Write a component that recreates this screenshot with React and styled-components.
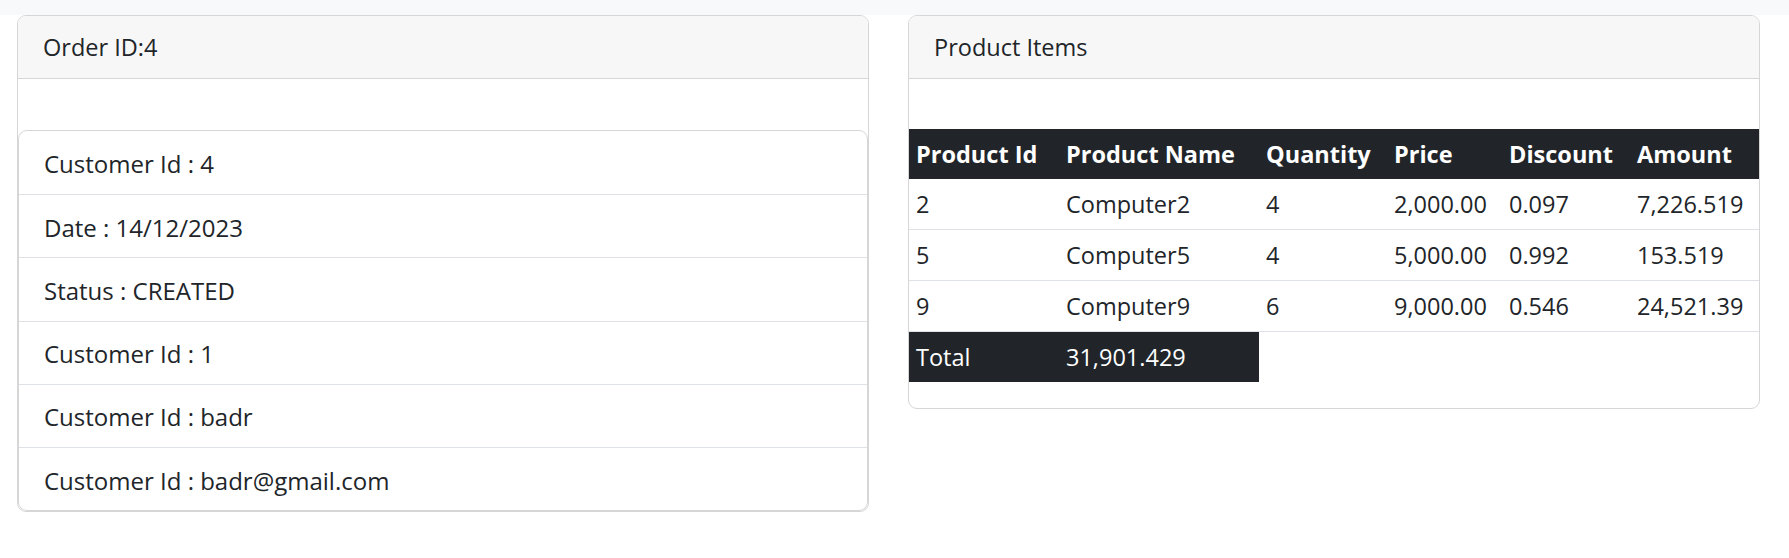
import * as React from "react";
import styled, { createGlobalStyle } from "styled-components";

const GlobalStyle = createGlobalStyle`
  body {
    margin: 0;
    background: #fff;
    color: #212529;
    font-family: "Open Sans", "Noto Sans", sans-serif;
  }
`;

const TopBar = styled.div`
  height: 15px;
  background-color: #f8f9fa;
`;

const Main = styled.div`
  display: grid;
  grid-template-columns: 852px 852px;
  column-gap: 39px;
  padding: 0 29px 0 17px;
  align-items: start;
`;

const Card = styled.div`
  border: 1px solid #d6d6d6;
  border-radius: 9px;
  overflow: hidden;
  background: #fff;
  padding-bottom: ${(p) => p.$bottom || 0}px;
`;

const CardHeader = styled.div`
  height: 62px;
  display: flex;
  align-items: center;
  padding: 0 25px;
  background-color: #f7f7f7;
  border-bottom: 1px solid #d6d6d6;
  font-size: 23.5px;
`;

const CardBody = styled.div`
  padding-top: ${(p) => p.$top}px;
`;

const ListGroup = styled.ul`
  list-style: none;
  margin: 0;
  padding: 0;
  border: 1px solid #d6d6d6;
  border-radius: 9px;
  overflow: hidden;
`;

const ListItem = styled.li`
  height: 63.2px;
  display: flex;
  align-items: center;
  padding: 2px 25px 0;
  box-sizing: border-box;
  font-size: 24px;
  & + & {
    border-top: 1px solid #dee2e6;
  }
`;

const Table = styled.table`
  width: 100%;
  table-layout: fixed;
  border-collapse: collapse;
  font-size: 23.5px;
`;

const HeadCell = styled.th`
  height: 50px;
  padding: 0 7px;
  text-align: left;
  font-weight: 700;
  color: #fff;
  background-color: #212529;
  white-space: nowrap;
`;

const Row = styled.tr`
  border-bottom: ${(p) => (p.$total ? "none" : "1px solid #dee2e6")};
`;

const Cell = styled.td`
  height: 50px;
  padding: 0 7px;
  white-space: nowrap;
  color: ${(p) => (p.$dark ? "#fff" : "#212529")};
  background-color: ${(p) => (p.$dark ? "#212529" : "transparent")};
`;

const info = [
  "Customer Id : 4",
  "Date : 14/12/2023",
  "Status : CREATED",
  "Customer Id : 1",
  "Customer Id : badr",
  "Customer Id : badr@gmail.com"
];

const items = [
  ["2", "Computer2", "4", "2,000.00", "0.097", "7,226.519"],
  ["5", "Computer5", "4", "5,000.00", "0.992", "153.519"],
  ["9", "Computer9", "6", "9,000.00", "0.546", "24,521.39"]
];

const widths = [150, 200, 128, 115, 128, 129];

export default function App() {
  return (
    <>
      <GlobalStyle />
      <TopBar />
      <Main>
        <Card>
          <CardHeader>Order ID:4</CardHeader>
          <CardBody $top={51}>
            <ListGroup>
              {info.map((line, index) => (
                <ListItem key={line + index}>{line}</ListItem>
              ))}
            </ListGroup>
          </CardBody>
        </Card>

        <Card $bottom={26}>
          <CardHeader>Product Items</CardHeader>
          <CardBody $top={50}>
            <Table>
              <colgroup>
                {widths.map((w, i) => (
                  <col key={i} style={{ width: w }} />
                ))}
              </colgroup>
              <thead>
                <tr>
                  <HeadCell>Product Id</HeadCell>
                  <HeadCell>Product Name</HeadCell>
                  <HeadCell>Quantity</HeadCell>
                  <HeadCell>Price</HeadCell>
                  <HeadCell>Discount</HeadCell>
                  <HeadCell>Amount</HeadCell>
                </tr>
              </thead>
              <tbody>
                {items.map((row) => (
                  <Row key={row[0]}>
                    {row.map((val, i) => (
                      <Cell key={i}>{val}</Cell>
                    ))}
                  </Row>
                ))}
                <Row $total>
                  <Cell $dark>Total</Cell>
                  <Cell $dark>31,901.429</Cell>
                </Row>
              </tbody>
            </Table>
          </CardBody>
        </Card>
      </Main>
    </>
  );
}
